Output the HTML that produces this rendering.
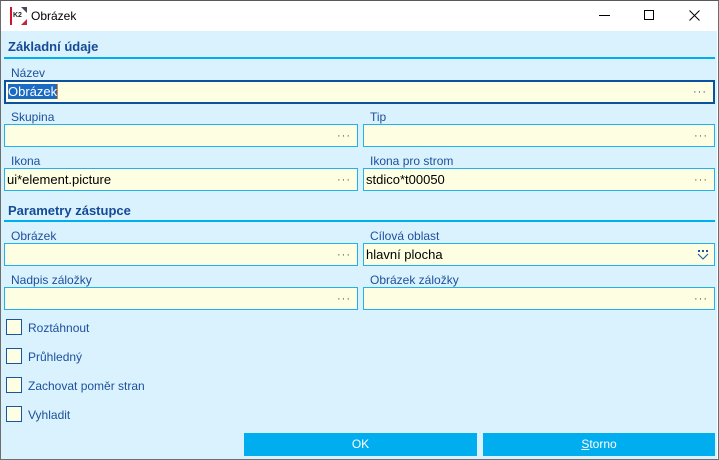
<!DOCTYPE html>
<html><head><meta charset="utf-8"><style>
*{margin:0;padding:0;box-sizing:border-box}
body{width:719px;height:460px;overflow:hidden;background:#fff;font-family:"Liberation Sans",sans-serif;position:relative}
.win{position:absolute;left:0;top:0;width:719px;height:460px;border:1px solid #6d6d6d;border-top:1px solid #5a5a5a}
.title{position:absolute;left:1px;top:1px;width:716px;height:30px;background:#fff}
.content{position:absolute;left:1px;top:31px;width:716px;height:428px;background:#d9f2fe}
.t{position:absolute;white-space:nowrap}
.lbl{position:absolute;font-size:12px;color:#1d4f9c}
.hdr{position:absolute;font-size:13px;font-weight:bold;color:#154a96}
.line{position:absolute;height:2px;background:#00adef}
.inp{position:absolute;height:23px;background:#fefee2;border:1px solid #1fb2ee;font-size:13px;color:#000;padding:3px 0 0 2px}
.dots{position:absolute;right:6px;top:6px;font-size:11px;line-height:11px;color:#555;letter-spacing:1px}
.cb{position:absolute;left:6px;width:16px;height:16px;background:#fefee2;border:1px solid #1a55a2}
.cbl{position:absolute;left:28px;font-size:12px;color:#1d4f9c}
.btn{position:absolute;top:433px;height:23px;background:#00adef;color:#fff;font-size:12px;text-align:center;line-height:23px}
</style></head><body>
<div class="win"></div>
<div class="title">
 <div class="t" style="left:8px;top:6px;width:18px;height:18px;background:#fff">
  <div style="position:absolute;left:1px;top:0;width:2px;height:18px;background:#d4102a"></div>
  <div style="position:absolute;left:4px;top:5px;font-size:7px;font-weight:bold;color:#222">K2</div>
  <div style="position:absolute;left:12px;top:0;width:6px;height:6px;background:#46485f;clip-path:polygon(0 0,100% 0,100% 100%)"></div>
  <div style="position:absolute;left:12px;top:12px;width:6px;height:6px;background:#c2263c;clip-path:polygon(100% 0,100% 100%,0 100%)"></div>
 </div>
 <div class="t" style="left:30px;top:8px;font-size:12px;color:#000">Obrázek</div>
 <div class="t" style="left:598px;top:14px;width:11px;height:1px;background:#000"></div>
 <div class="t" style="left:643px;top:9px;width:10px;height:10px;border:1px solid #000"></div>
 <svg class="t" style="left:688px;top:9px" width="11" height="11"><path d="M0.5 0.5L10.5 10.5M10.5 0.5L0.5 10.5" stroke="#000" stroke-width="1"/></svg>
</div>
<div class="content"></div>

<div class="hdr" style="left:8px;top:39px">Základní údaje</div>
<div class="line" style="left:4px;top:57px;width:711px"></div>
<div class="lbl" style="left:11px;top:66px">Název</div>
<div class="inp" style="left:4px;top:80px;width:711px;height:24px;border:2px solid #0a52a0;padding:2px 0 0 2px"><span style="background:#1a6bc4;color:#fff;border-right:1px solid #f08020">Obrázek</span><span class="dots" style="color:#1a55a2;top:5px">···</span></div>

<div class="lbl" style="left:11px;top:110px">Skupina</div>
<div class="inp" style="left:4px;top:124px;width:354px"><span class="dots">···</span></div>
<div class="lbl" style="left:370px;top:110px">Tip</div>
<div class="inp" style="left:363px;top:124px;width:352px"><span class="dots">···</span></div>

<div class="lbl" style="left:11px;top:154px">Ikona</div>
<div class="inp" style="left:4px;top:168px;width:354px">ui*element.picture<span class="dots">···</span></div>
<div class="lbl" style="left:370px;top:154px">Ikona pro strom</div>
<div class="inp" style="left:363px;top:168px;width:352px">stdico*t00050<span class="dots">···</span></div>

<div class="hdr" style="left:8px;top:203px">Parametry zástupce</div>
<div class="line" style="left:4px;top:220px;width:711px"></div>

<div class="lbl" style="left:11px;top:229px">Obrázek</div>
<div class="inp" style="left:4px;top:243px;width:354px"><span class="dots">···</span></div>
<div class="lbl" style="left:370px;top:229px">Cílová oblast</div>
<div class="inp" style="left:363px;top:243px;width:352px">hlavní plocha<svg style="position:absolute;right:5px;top:5px" width="12" height="11"><path d="M1 1h2v2H1zM5 1h2v2H5zM9 1h2v2H9z" fill="#1a55a2"/><path d="M1 5l5 5 5-5" stroke="#1a55a2" fill="none"/></svg></div>

<div class="lbl" style="left:11px;top:273px">Nadpis záložky</div>
<div class="inp" style="left:4px;top:287px;width:354px"><span class="dots">···</span></div>
<div class="lbl" style="left:370px;top:273px">Obrázek záložky</div>
<div class="inp" style="left:363px;top:287px;width:352px"><span class="dots">···</span></div>

<div class="cb" style="top:319px"></div><div class="cbl" style="top:321px">Roztáhnout</div>
<div class="cb" style="top:348px"></div><div class="cbl" style="top:350px">Průhledný</div>
<div class="cb" style="top:377px"></div><div class="cbl" style="top:379px">Zachovat poměr stran</div>
<div class="cb" style="top:406px"></div><div class="cbl" style="top:408px">Vyhladit</div>

<div class="btn" style="left:244px;width:233px">OK</div>
<div class="btn" style="left:483px;width:232px"><u>S</u>torno</div>
</body></html>
